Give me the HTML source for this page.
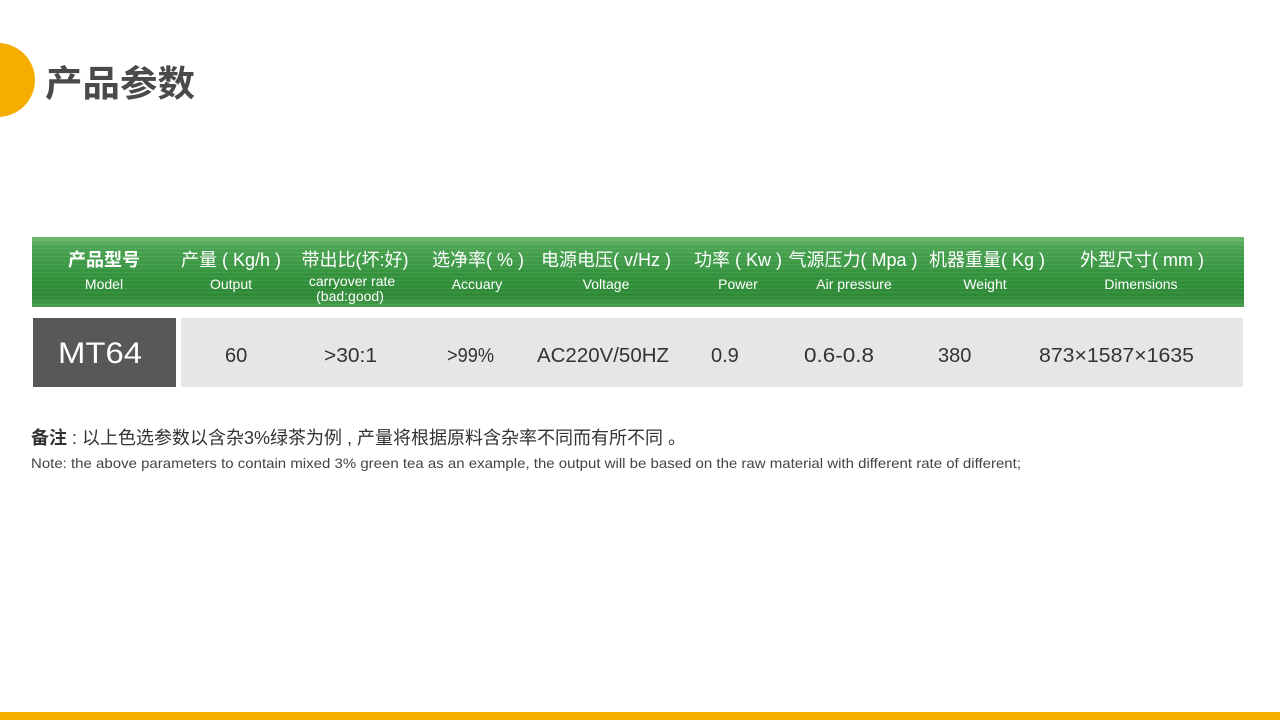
<!DOCTYPE html>
<html><head><meta charset="utf-8"><style>
html,body{margin:0;padding:0;width:1280px;height:720px;overflow:hidden;background:#fff}
svg{display:block}
</style></head><body>
<svg width="1280" height="720" xmlns="http://www.w3.org/2000/svg" font-family="'Liberation Sans','Noto Sans CJK SC',sans-serif">
<defs>
<linearGradient id="g" x1="0" y1="0" x2="0" y2="1">
<stop offset="0" stop-color="#6cb86f"/>
<stop offset="0.15" stop-color="#4aa352"/>
<stop offset="0.6" stop-color="#31903a"/>
<stop offset="0.85" stop-color="#2f8a37"/>
<stop offset="1" stop-color="#4a9e50"/>
</linearGradient>
<pattern id="st" width="8" height="4" patternUnits="userSpaceOnUse">
<rect width="8" height="1" fill="#ffffff" fill-opacity="0.08"/>
</pattern>
</defs>
<circle cx="-2" cy="80" r="37" fill="#f5ae00"/>
<text x="45" y="96" font-size="36" font-weight="bold" fill="#4a4a4a" font-family="'Noto Sans CJK SC',sans-serif" textLength="150" lengthAdjust="spacingAndGlyphs">产品参数</text>

<rect x="32" y="237" width="1212" height="70" fill="url(#g)"/>
<rect x="32" y="237" width="1212" height="70" fill="url(#st)"/>
<g fill="#fff" text-anchor="middle" font-size="18">
<text x="104" y="266" font-weight="bold">产品型号</text>
<text x="231" y="266">产量 ( Kg/h )</text>
<text x="355" y="266">带出比(坏:好)</text>
<text x="478" y="266">选净率( % )</text>
<text x="606" y="266">电源电压( v/Hz )</text>
<text x="738" y="266">功率 ( Kw )</text>
<text x="853" y="266">气源压力( Mpa )</text>
<text x="987" y="266">机器重量( Kg )</text>
<text x="1142" y="266">外型尺寸( mm )</text>
</g>
<g fill="#fff" text-anchor="middle" font-size="14">
<text x="104" y="289">Model</text>
<text x="231" y="289">Output</text>
<text x="352" y="286">carryover rate</text>
<text x="350" y="301">(bad:good)</text>
<text x="477" y="289">Accuary</text>
<text x="606" y="289">Voltage</text>
<text x="738" y="289">Power</text>
<text x="854" y="289">Air pressure</text>
<text x="985" y="289">Weight</text>
<text x="1141" y="289">Dimensions</text>
</g>

<rect x="33" y="318" width="143" height="69" fill="#58585a"/>
<rect x="181" y="318" width="1062" height="69" fill="#e6e6e6"/>
<text x="58" y="363" font-size="30" fill="#fff" textLength="84" lengthAdjust="spacingAndGlyphs">MT64</text>
<g fill="#333" font-size="20">
<text x="225" y="362">60</text>
<text x="324" y="362" textLength="53" lengthAdjust="spacingAndGlyphs">&gt;30:1</text>
<text x="447" y="362" textLength="47" lengthAdjust="spacingAndGlyphs">&gt;99%</text>
<text x="537" y="362" textLength="132" lengthAdjust="spacingAndGlyphs">AC220V/50HZ</text>
<text x="711" y="362">0.9</text>
<text x="804" y="362" textLength="70" lengthAdjust="spacingAndGlyphs">0.6-0.8</text>
<text x="938" y="362">380</text>
<text x="1039" y="362" textLength="155" lengthAdjust="spacingAndGlyphs">873×1587×1635</text>
</g>

<text x="31" y="444" font-size="18" fill="#333" textLength="655" lengthAdjust="spacingAndGlyphs"><tspan font-weight="bold">备注</tspan> : 以上色选参数以含杂3%绿茶为例 , 产量将根据原料含杂率不同而有所不同 。</text>
<text x="31" y="468" font-size="14" fill="#444" textLength="990" lengthAdjust="spacingAndGlyphs">Note: the above parameters to contain mixed 3% green tea as an example, the output will be based on the raw material with different rate of different;</text>

<rect x="0" y="712" width="1280" height="8" fill="#f5ae00"/>
</svg>
</body></html>
